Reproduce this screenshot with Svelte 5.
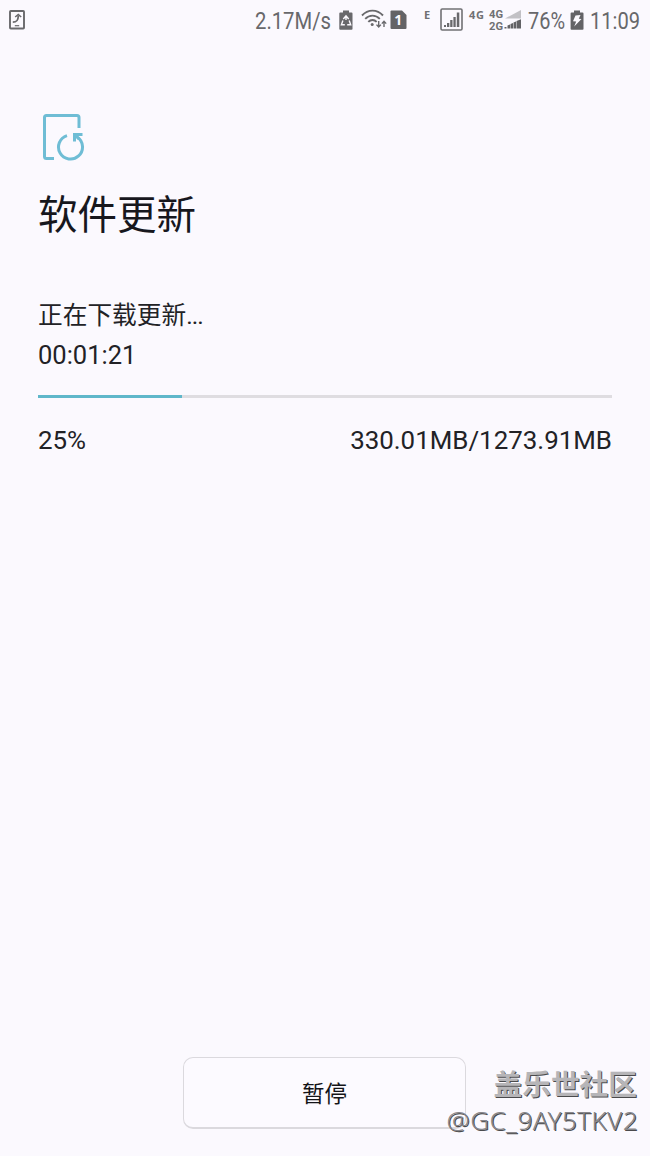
<script>
  let received = 330.01
  let total = 1273.91
  let percent = 25
  let remaining = '00:01:21'
  let paused = false

  function togglePause() {
    paused = !paused
  }
</script>

<div class="screen">
  <header class="status-bar">
    <svg class="notice" width="16" height="20" viewBox="0 0 16 20" fill="none" stroke="#69696c">
      <rect x="1" y="1" width="14" height="17.5" rx="0.8" stroke-width="1.9"/>
      <path d="M3.8 12.2C8.2 12 9.3 10 9.3 5.5" stroke-width="1.8"/>
      <path d="M6.2 7L9.3 4.4L12.2 7" stroke-width="1.5"/>
      <path d="M5.8 15.7h4.4" stroke-width="1.2"/>
    </svg>

    <svg class="speed" width="76" height="42">
      <text x="0" y="29" textLength="76" lengthAdjust="spacingAndGlyphs">2.17M/s</text>
    </svg>

    <svg class="saver" width="14" height="20" viewBox="0 0 14 20">
      <path d="M4 0.5h6v2h2.5q1 0 1 1V19q0 .8-1 .8H1.2q-.9 0-.9-.8V3.5q0-1 .9-1H4z" fill="#69696c"/>
      <path d="M4.3 9L7 5.8L9.7 9M10.2 10.5l1.5 4.2H8.2M5.8 14.7H2.4L3.9 10.5M7 6.2V10" fill="none" stroke="#fbf9fe" stroke-width="1.4"/>
    </svg>

    <svg class="wifi" width="27" height="20" viewBox="0 0 27 20" fill="none" stroke="#69696c">
      <path d="M1 6.5C7 0 16 0 22 6.5" stroke-width="1.9"/>
      <path d="M4.2 9.8C8.4 5.5 14.6 5.5 18.8 9.8" stroke-width="1.9"/>
      <path d="M7.3 12.9C9.8 10.3 13.2 10.3 15.7 12.9" stroke-width="1.9"/>
      <circle cx="11.2" cy="15.5" r="1.5" fill="#69696c" stroke="none"/>
      <path d="M17.7 12v6M15.5 15.6L17.7 18L19.9 15.6M23 18v-6M20.8 14.6L23 12.2L25.2 14.6" stroke-width="1.4"/>
    </svg>

    <svg class="sim" width="17" height="20" viewBox="0 0 17 20">
      <path d="M1.5 0.5H12L16.5 5V18q0 1-1 1H1.5q-1 0-1-1V1.5q0-1 1-1z" fill="#636366"/>
      <text class="badge" x="8.2" y="15" text-anchor="middle">1</text>
    </svg>

    <svg class="edge" width="8" height="42">
      <text class="small" x="0" y="19">E</text>
    </svg>

    <svg class="signal" width="23" height="23" viewBox="0 0 23 23">
      <rect x="1" y="1" width="21" height="21" rx="1.2" fill="none" stroke="#717174" stroke-width="1.6"/>
      <path d="M4 19v-2h2V19zM7 19v-4h2.3V19zM10.2 19v-7h2.3V19zM13.4 19V9h2.3V19zM16.8 19V4.5h2.5V19z" fill="#69696c"/>
    </svg>

    <svg class="lte" width="16" height="42">
      <text class="small" x="0" y="19" textLength="15">4G</text>
    </svg>

    <svg class="dual" width="33" height="42">
      <text class="tiny" x="0" y="18" textLength="14" lengthAdjust="spacingAndGlyphs">4G</text>
      <text class="tiny" x="0" y="30" textLength="14" lengthAdjust="spacingAndGlyphs">2G</text>
      <path d="M16 18.5L32 10V18.5z" fill="#c2c1c5"/>
      <path d="M15.5 28.5v-1.5h2V28.5zM18.5 28.5v-3l2.5-1V28.5zM21.5 28.5v-4.5l2.5-1V28.5zM24.5 28.5v-6l2.5-1V28.5zM27.5 28.5v-7.5l4.5-1.8V28.5z" fill="#626265"/>
    </svg>

    <svg class="level" width="37" height="42">
      <text x="0" y="29" textLength="37" lengthAdjust="spacingAndGlyphs">76%</text>
    </svg>

    <svg class="charging" width="14" height="20" viewBox="0 0 14 20">
      <path d="M4 0.5h6v2h2.5q1 0 1 1V19q0 .8-1 .8H1.5q-.9 0-.9-.8V3.5q0-1 .9-1H4z" fill="#636366"/>
      <path d="M5.5 5.5L10.5 5L8.8 8.8L11.5 9L4.2 16.5L6.2 11.5L3 11.2z" fill="#fbf9fe"/>
    </svg>

    <svg class="clock" width="50" height="42">
      <text x="0" y="29" textLength="50" lengthAdjust="spacingAndGlyphs">11:09</text>
    </svg>
  </header>

  <main>
    <svg class="update-icon" width="42" height="48" viewBox="0 0 42 48" fill="none" stroke="#6fbdd5" stroke-width="3">
      <path d="M11 45.5H3.5Q1.5 45.5 1.5 43.5V4.5Q1.5 2.5 3.5 2.5H34Q36 2.5 36 4.5V15"/>
      <path d="M24 22.6A12 12 0 1 0 34.5 24.3"/>
      <path d="M31.5 28.5V21.5H39.5"/>
      <path d="M32 22L36 26"/>
    </svg>

    <h1>软件更新</h1>
    <p class="state">正在下载更新<span>...</span></p>
    <p class="remaining">{remaining}</p>

    <div class="track">
      <div class="fill" style="width: {percent}%"></div>
    </div>

    <div class="figures">
      <span class="percent">{percent}%</span>
      <span class="size">{received}MB/{total}MB</span>
    </div>
  </main>

  <footer>
    <button type="button" on:click={togglePause}>{paused ? '继续' : '暂停'}</button>
  </footer>

  <div class="watermark">
    <div class="community">盖乐世社区</div>
    <div class="author">@GC_9AY5TKV2</div>
  </div>
</div>

<style>
  :global(body) {
    margin: 0;
    background: #fbf9fe;
  }

  .screen {
    position: relative;
    display: flex;
    flex-direction: column;
    width: 650px;
    height: 1156px;
    overflow: hidden;
    background: #fbf9fe;
    color: #222226;
    font-family: Roboto, 'Noto Sans CJK SC', sans-serif;
  }

  .status-bar {
    display: flex;
    align-items: flex-start;
    height: 42px;
    padding: 0 10px 0 9px;
  }

  .status-bar svg {
    flex: none;
    overflow: visible;
  }

  .status-bar text {
    font-size: 23px;
    fill: #68686b;
  }

  .status-bar text.small {
    font-family: 'Noto Sans', sans-serif;
    font-size: 11px;
    font-weight: 700;
    fill: #707073;
  }

  .status-bar text.tiny {
    font-size: 10.2px;
    font-weight: 700;
    fill: #707073;
  }

  .status-bar text.badge {
    font-family: 'Noto Sans', sans-serif;
    font-size: 14px;
    font-weight: 700;
    fill: #fbf9fe;
  }

  .notice {
    margin-top: 10px;
  }

  .speed {
    margin-left: auto;
  }

  .saver {
    margin: 10px 0 0 8px;
  }

  .wifi {
    margin: 9px 0 0 8px;
  }

  .sim {
    margin: 10px 0 0 2px;
  }

  .edge {
    margin-left: 17px;
  }

  .signal {
    margin: 8px 0 0 8px;
  }

  .lte {
    margin-left: 6px;
  }

  .dual {
    margin-left: 4px;
  }

  .level {
    margin-left: 6px;
  }

  .charging {
    margin: 10px 0 0 5px;
  }

  .clock {
    margin-left: 6px;
  }

  main {
    flex: 1;
    padding: 71px 38px 0;
  }

  .update-icon {
    display: block;
    margin-left: 5px;
  }

  h1 {
    margin: 25px 0 0;
    color: #17171d;
    font-size: 39.5px;
    font-weight: 400;
    line-height: 60px;
  }

  p {
    margin: 0;
  }

  .state {
    margin-top: 50px;
    font-size: 24.7px;
    line-height: 40px;
  }

  .state span {
    letter-spacing: -0.9px;
  }

  .remaining {
    margin-top: -1px;
    font-size: 25.5px;
    line-height: 40px;
  }

  .track {
    height: 3px;
    margin-top: 20px;
    background: #dfdde1;
  }

  .fill {
    height: 100%;
    background: #5fb7ca;
  }

  .figures {
    display: flex;
    justify-content: space-between;
    margin-top: 22px;
    font-size: 25.9px;
    line-height: 40px;
  }

  footer {
    display: flex;
    justify-content: center;
    padding-bottom: 27px;
  }

  button {
    width: 283px;
    height: 72px;
    margin-right: 1px;
    padding: 0 0 2px;
    border: 1.5px solid #dbd9de;
    border-bottom-width: 2px;
    border-radius: 10px;
    background: #fcfaff;
    color: #141418;
    font-family: 'Noto Sans CJK SC', sans-serif;
    font-size: 22.5px;
  }

  /* Forum stamp laid over the lower right corner */
  .watermark {
    position: absolute;
    right: 13px;
    bottom: 18px;
    color: #b6b5b8;
    text-align: right;
    text-shadow: 1px 1px 0 #4a4a4c;
    pointer-events: none;
  }

  .community {
    font-family: 'Noto Sans CJK SC', sans-serif;
    font-size: 28.7px;
    font-weight: 700;
    line-height: 38px;
  }

  .author {
    margin-right: -1px;
    color: #88878b;
    font-family: 'Noto Sans', sans-serif;
    font-size: 26px;
    font-weight: 300;
    letter-spacing: 0.45px;
    line-height: 36px;
  }
</style>
